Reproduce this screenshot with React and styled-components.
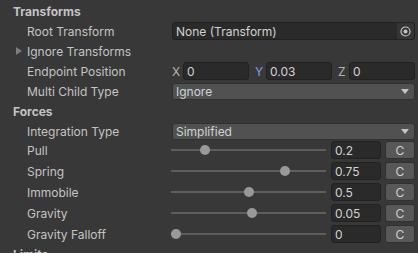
import React from "react";
import styled, { createGlobalStyle } from "styled-components";

const Global = createGlobalStyle`
  html, body { margin: 0; padding: 0; background: #383838; }
  body { font-family: Inter, "Noto Sans", "Liberation Sans", sans-serif; font-size: 12px; color: #c4c4c4; overflow: hidden; }
`;

const Panel = styled.div`
  width: 418px;
  height: 253px;
  padding-top: 1px;
  box-sizing: border-box;
  background: #383838;
  overflow: hidden;
`;

const Row = styled.div`
  display: flex;
  align-items: center;
  height: 20px;
  padding-right: 3px;
`;

const Header = styled(Row)`
  padding-left: 13px;
  font-weight: 700;
  color: #c4c4c4;
`;

const Label = styled.div`
  width: 145px;
  padding-left: ${(p) => (p.$foldout ? 16 : 27)}px;
  flex: none;
  display: flex;
  align-items: center;
  color: #c4c4c4;
  white-space: nowrap;
`;

const Arrow = styled.span`
  width: 0;
  height: 0;
  border-top: 4px solid transparent;
  border-bottom: 4px solid transparent;
  border-left: 6px solid #7e7e7e;
  margin-right: 5px;
`;

const Control = styled.div`
  flex: 1;
  display: flex;
  align-items: center;
  min-width: 0;
`;

const Field = styled.div`
  box-sizing: border-box;
  height: 18px;
  flex: 1;
  background: #2a2a2a;
  border: 1px solid #212121;
  border-radius: 3px;
  color: #d2d2d2;
  display: flex;
  align-items: center;
  padding-left: 3px;
  overflow: hidden;
  white-space: nowrap;
`;

const ObjField = styled(Field)`
  padding-right: 0;
  justify-content: space-between;
`;

const Picker = styled.div`
  width: 17px;
  height: 16px;
  background: #353535;
  display: flex;
  align-items: center;
  justify-content: center;
  border-radius: 0 2px 2px 0;
`;

const Vec = styled.div`
  flex: 1;
  display: grid;
  grid-template-columns: repeat(3, 1fr);
  column-gap: 6px;
`;

const Axis = styled.div`
  display: flex;
  align-items: center;
  gap: 2px;
`;

const AxisLabel = styled.span`
  width: 9px;
  color: ${(p) => p.$color};
`;

const Dropdown = styled.div`
  box-sizing: border-box;
  flex: 1;
  height: 17px;
  background: #515151;
  border: 1px solid #303030;
  border-radius: 3px;
  color: #d2d2d2;
  display: flex;
  align-items: center;
  justify-content: space-between;
  padding: 0 5px 0 3px;
`;

const Caret = styled.span`
  width: 0;
  height: 0;
  border-left: 4px solid transparent;
  border-right: 4px solid transparent;
  border-top: 5px solid #c4c4c4;
`;

const Sliders = styled.div`
  display: flex;
  flex-direction: column;
  gap: 3px;
  margin-bottom: 1px;
`;

const SliderRow = styled(Row)`
  height: 18px;
`;

const Track = styled.div`
  position: relative;
  width: 155px;
  height: 18px;
  flex: none;
  margin-left: -1px;
  &::before {
    content: "";
    position: absolute;
    left: 0;
    right: 0;
    top: 8px;
    height: 2px;
    background: #5e5e5e;
  }
`;

const Knob = styled.div`
  position: absolute;
  top: 4px;
  width: 10px;
  height: 10px;
  margin-left: -5px;
  border-radius: 50%;
  background: #999999;
`;

const ValueField = styled(Field)`
  flex: none;
  width: 50px;
  margin-left: 5px;
`;

const CButton = styled.div`
  box-sizing: border-box;
  width: 30px;
  height: 18px;
  margin-left: 4px;
  background: #585858;
  border: 1px solid #303030;
  border-radius: 3px;
  color: #d2d2d2;
  display: flex;
  align-items: center;
  justify-content: center;
`;

const sliders = [
  { label: "Pull", value: "0.2", pos: 0.2 },
  { label: "Spring", value: "0.75", pos: 0.75 },
  { label: "Immobile", value: "0.5", pos: 0.5 },
  { label: "Gravity", value: "0.05", pos: 0.525 },
  { label: "Gravity Falloff", value: "0", pos: 0 },
];

export default function App() {
  return (
    <Panel>
      <Global />
      <Header>Transforms</Header>
      <Row>
        <Label>Root Transform</Label>
        <Control>
          <ObjField>
            <span>None (Transform)</span>
            <Picker>
              <svg width="11" height="11" viewBox="0 0 11 11">
                <circle cx="5.5" cy="5.5" r="4.5" fill="none" stroke="#c4c4c4" strokeWidth="1.2" />
                <circle cx="5.5" cy="5.5" r="2" fill="#c4c4c4" />
              </svg>
            </Picker>
          </ObjField>
        </Control>
      </Row>
      <Row>
        <Label $foldout>
          <Arrow />
          Ignore Transforms
        </Label>
      </Row>
      <Row>
        <Label>Endpoint Position</Label>
        <Control>
          <Vec>
            <Axis>
              <AxisLabel $color="#b4b4b4">X</AxisLabel>
              <Field>0</Field>
            </Axis>
            <Axis>
              <AxisLabel $color="#7ca3e6">Y</AxisLabel>
              <Field>0.03</Field>
            </Axis>
            <Axis>
              <AxisLabel $color="#b4b4b4">Z</AxisLabel>
              <Field>0</Field>
            </Axis>
          </Vec>
        </Control>
      </Row>
      <Row>
        <Label>Multi Child Type</Label>
        <Control>
          <Dropdown>
            <span>Ignore</span>
            <Caret />
          </Dropdown>
        </Control>
      </Row>
      <Header>Forces</Header>
      <Row>
        <Label>Integration Type</Label>
        <Control>
          <Dropdown>
            <span>Simplified</span>
            <Caret />
          </Dropdown>
        </Control>
      </Row>
      <Sliders>
        {sliders.map((s) => (
          <SliderRow key={s.label}>
            <Label>{s.label}</Label>
            <Control>
              <Track>
                <Knob style={{ left: `${5 + s.pos * 145}px` }} />
              </Track>
              <ValueField>{s.value}</ValueField>
              <CButton>C</CButton>
            </Control>
          </SliderRow>
        ))}
      </Sliders>
      <Header>Limits</Header>
    </Panel>
  );
}
